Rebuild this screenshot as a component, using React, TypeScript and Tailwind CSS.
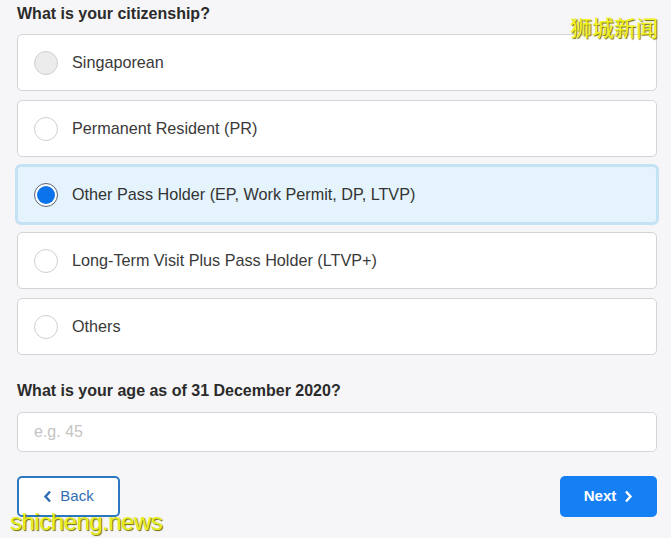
import React from "react";

const options = [
    { label: "Singaporean", state: "disabled" },
    { label: "Permanent Resident (PR)", state: "idle" },
    { label: "Other Pass Holder (EP, Work Permit, DP, LTVP)", state: "checked" },
    { label: "Long-Term Visit Plus Pass Holder (LTVP+)", state: "idle" },
    { label: "Others", state: "idle" },
];

function Radio({ state }: { state: string }) {
    if (state === "checked") {
        return (
            <span className="flex h-[24px] w-[24px] items-center justify-center rounded-full border border-[#5a6470] bg-white">
                <span className="h-[18px] w-[18px] rounded-full bg-[#0b74ea]" />
            </span>
        );
    }
    return (
        <span
            className={
                state === "disabled"
                    ? "h-[24px] w-[24px] rounded-full border border-[#cfcfcf] bg-[#ececec]"
                    : "h-[24px] w-[24px] rounded-full border border-[#cfcfcf] bg-white"
            }
        />
    );
}

export default function App() {
    return (
        <div
            className="relative h-[538px] w-[671px] overflow-hidden bg-[#f6f6f8] pl-[17px] pr-[14px] text-[#333]"
            style={{ fontFamily: '"Liberation Sans", Arial, sans-serif' }}
        >
            <h2 className="pt-[4px] text-[16px] font-bold leading-[20px] text-[#2b2b2b]">
                What is your citizenship?
            </h2>
            <div className="mt-[10px] flex flex-col gap-[9px]">
                {options.map((o) =>
                    o.state === "checked" ? (
                        <div
                            key={o.label}
                            className="-mx-[2px] -my-[2px] flex h-[61px] items-center gap-[14px] rounded-[6px] border-[3px] border-[#c3e3f5] bg-[#e4f3fc] pl-[16px]"
                        >
                            <Radio state={o.state} />
                            <span className="text-[16.2px] text-[#333]">{o.label}</span>
                        </div>
                    ) : (
                        <div
                            key={o.label}
                            className="flex h-[57px] items-center gap-[14px] rounded-[5px] border border-[#d4d4d8] bg-white pl-[16px]"
                        >
                            <Radio state={o.state} />
                            <span className="text-[16.2px] text-[#3a3a3a]">{o.label}</span>
                        </div>
                    )
                )}
            </div>
            <h2 className="mt-[26px] text-[16px] font-bold leading-[20px] text-[#2b2b2b]">
                What is your age as of 31 December 2020?
            </h2>
            <div className="mt-[11px] flex h-[40px] items-center rounded-[5px] border border-[#d4d4d8] bg-white pl-[16px]">
                <span className="text-[16px] text-[#c4c4c4]">e.g. 45</span>
            </div>
            <div className="mt-[24px] flex items-center justify-between">
                <button className="flex h-[41px] w-[103px] items-center justify-center gap-[8px] rounded-[5px] border-2 border-[#2c78c0] bg-white text-[15px] text-[#2f6db3]">
                    <svg width="9" height="13" viewBox="0 0 9 13" fill="none">
                        <path d="M7 1.5L2.5 6.5L7 11.5" stroke="#2f6db3" strokeWidth="2.4" />
                    </svg>
                    Back
                </button>
                <button className="flex h-[41px] w-[97px] items-center justify-center gap-[8px] rounded-[5px] bg-[#1580f3] text-[15px] font-bold text-white">
                    Next
                    <svg width="9" height="13" viewBox="0 0 9 13" fill="none">
                        <path d="M2 1.5L6.5 6.5L2 11.5" stroke="white" strokeWidth="2.4" />
                    </svg>
                </button>
            </div>
            <span
                className="absolute right-[13px] top-[12px] text-[22px] leading-[28px] text-[#f2f21c]"
                style={{
                    fontFamily: '"Noto Sans CJK SC", sans-serif',
                    textShadow: "1px 1px 1px #6b6b00",
                }}
            >
                狮城新闻
            </span>
            <span
                className="absolute left-[10px] top-[507px] text-[24px] leading-[30px] tracking-[-0.5px] text-[#e8ee20]"
                style={{ textShadow: "1px 1px 1px #6b6b00" }}
            >
                shicheng.news
            </span>
        </div>
    );
}
